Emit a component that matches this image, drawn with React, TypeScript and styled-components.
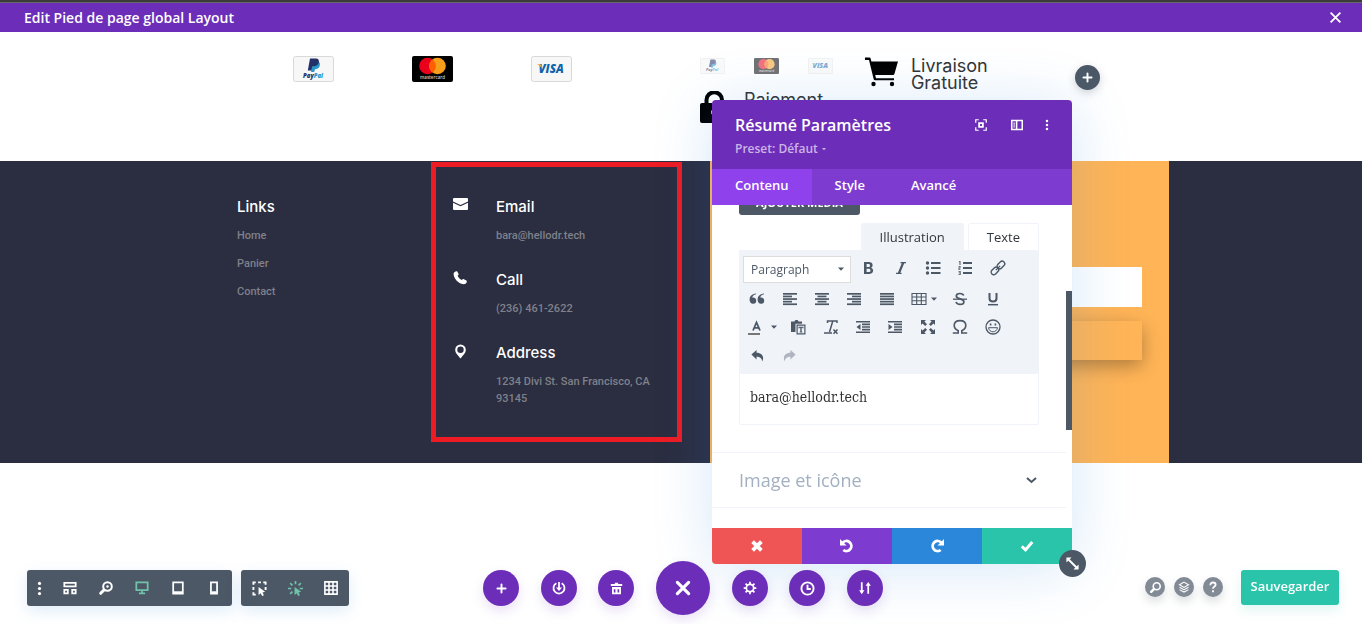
import React from "react";
import styled, { createGlobalStyle, css } from "styled-components";

const c = {
  purple: "#6c2eb9",
  violet: "#7e3bd0",
  bright: "#8f42ec",
  slate: "#4c5866",
  teal: "#29c4a9",
  red: "#ef5555",
  blue: "#2b87da",
  night: "#2b2d40",
  orange: "#ffb457",
  mint: "#70c3a9",
  pale: "#f0f3f8",
};
const ui = `"Open Sans", "Noto Sans", sans-serif`;
const geo = `Inter, "Liberation Sans", sans-serif`;

const Global = createGlobalStyle`
  * { box-sizing: border-box; }
  html, body { margin: 0; background: #fff; }
  body { min-height: 100vh; overflow: hidden; font-family: ${ui}; }
  button { border: 0; padding: 0; margin: 0; background: none; font: inherit; color: inherit; cursor: pointer; }
  h1, h2, h3, p, ul { margin: 0; padding: 0; font-weight: inherit; font-size: inherit; }
  svg { display: block; flex: none; }
`;

/* ---------- top bar ---------- */
const TopBar = styled.header`
  display: flex;
  align-items: center;
  justify-content: space-between;
  height: 32px;
  padding: 0 20px 0 24px;
  border-top: 2px solid #3a3a3a;
  box-shadow: inset 0 1px 0 #686868;
  background: ${c.purple};
  color: #fff;
`;
const TopTitle = styled.h1`
  font-size: 14px;
  font-weight: 600;
  line-height: 20px;
  padding-top: 1px;
`;

/* ---------- payment strip ---------- */
const Strip = styled.section`
  display: grid;
  grid-template-columns: 407fr 165fr 210fr 287fr;
  padding: 24px 0 38px 21.5%;
`;
const Cards = styled.div<{ $small?: boolean }>`
  display: flex;
  gap: ${(p) => (p.$small ? "29px" : "78px")};
  opacity: ${(p) => (p.$small ? 0.55 : 1)};
  padding-top: ${(p) => (p.$small ? "2px" : "0")};
  svg {
    width: ${(p) => (p.$small ? "25px" : "41px")};
    height: ${(p) => (p.$small ? "16px" : "26px")};
  }
`;
const Perk = styled.div<{ $below?: boolean }>`
  display: flex;
  align-items: flex-start;
  gap: ${(p) => (p.$below ? "19px" : "13px")};
  padding-top: ${(p) => (p.$below ? "17px" : "1px")};
`;
const PerkText = styled.h3`
  max-width: 90px;
  font: 400 18px/17px ${geo};
  color: #333;
`;
const AddRound = styled.button`
  display: grid;
  place-items: center;
  width: 25px;
  height: 25px;
  margin-top: 9px;
  border-radius: 50%;
  background: ${c.slate};
  color: #fff;
  box-shadow: 0 3px 8px rgba(76, 88, 102, 0.25);
`;

/* ---------- footer preview ---------- */
const FooterArea = styled.footer`
  display: grid;
  grid-template-columns: 194fr 279fr 459fr 193fr;
  padding-left: 17.4%;
  background: ${c.night};
`;
const heading = css`
  font: 500 15px/18px ${geo};
  color: #fff;
  margin-bottom: 11px;
`;
const small = css`
  font: 500 11px/17px Roboto, "Liberation Sans", sans-serif;
  color: #7f818a;
`;
const LinksCol = styled.nav`
  padding-top: 37px;
`;
const ColTitle = styled.h2`
  ${heading}
`;
const LinkList = styled.ul`
  display: grid;
  gap: 11px;
  list-style: none;
  ${small}
  a { color: inherit; text-decoration: none; }
`;
const ContactBox = styled.div`
  display: flex;
  flex-direction: column;
  gap: 27px;
  width: 90%;
  margin: 1px 0 21px;
  padding: 31px 17px 30px;
  border: 5px solid #ed1c24;
`;
const Contact = styled.div`
  display: flex;
  align-items: flex-start;
  gap: 28px;
  color: #fff;
`;
const ContactText = styled.p`
  ${small}
`;
const Subscribe = styled.form`
  display: flex;
  flex-direction: column;
  gap: 14px;
  padding: 106px 27px 0;
  background: ${c.orange};
`;
const EmailInput = styled.input`
  width: 100%;
  height: 40px;
  border: 0;
  background: #fff;
`;
const SubscribeButton = styled.button`
  height: 39px;
  background: ${c.orange};
  box-shadow: 0 6px 18px rgba(0, 0, 0, 0.3);
`;

/* ---------- bottom bar ---------- */
const BottomBar = styled.div`
  position: fixed;
  left: 0;
  right: 0;
  bottom: 9px;
  display: grid;
  grid-template-columns: 1fr auto 1fr;
  align-items: center;
  padding: 0 23px 0 27px;
`;
const Left = styled.div`
  display: flex;
  gap: 9px;
`;
const ToolGroup = styled.div`
  display: flex;
  height: 36px;
  border-radius: 3px;
  background: ${c.slate};
  color: #fff;
  box-shadow: 0 5px 15px rgba(43, 135, 218, 0.15);
`;
const Tool = styled.button<{ $on?: boolean; $narrow?: boolean }>`
  display: grid;
  place-items: center;
  width: ${(p) => (p.$narrow ? "25px" : "36px")};
  color: ${(p) => (p.$on ? c.mint : "#fff")};
`;
const Center = styled.div`
  display: flex;
  align-items: center;
  justify-content: space-between;
  width: 400px;
`;
const Round = styled.button<{ $big?: boolean }>`
  display: grid;
  place-items: center;
  width: ${(p) => (p.$big ? "54px" : "36px")};
  height: ${(p) => (p.$big ? "54px" : "36px")};
  border-radius: 50%;
  background: ${c.purple};
  color: #fff;
  box-shadow: 0 5px 12px rgba(108, 46, 185, 0.15);
`;
const Right = styled.div`
  display: flex;
  align-items: center;
  justify-content: flex-end;
  gap: 9px;
  padding-bottom: 2px;
`;
const Help = styled.button`
  display: grid;
  place-items: center;
  width: 20px;
  height: 20px;
  border-radius: 50%;
  background: #828a95;
  color: #fff;
  box-shadow: 0 5px 10px rgba(76, 88, 102, 0.2);
`;
const Save = styled.button`
  width: 98px;
  height: 35px;
  margin-left: 9px;
  padding-bottom: 2px;
  border-radius: 3px;
  background: ${c.teal};
  color: #fff;
  font-size: 13px;
  font-weight: 600;
  line-height: 20px;
  box-shadow: 0 5px 12px rgba(41, 196, 169, 0.15);
`;

/* ---------- settings window ---------- */
const Modal = styled.section`
  position: fixed;
  left: 712px;
  top: 100px;
  display: flex;
  flex-direction: column;
  width: 360px;
  height: 464px;
  border-radius: 4px;
  background: #fff;
  box-shadow: 0 5px 60px rgba(43, 135, 218, 0.2);
`;
const ModalHead = styled.div`
  display: flex;
  justify-content: space-between;
  height: 69px;
  padding: 14px 19px 0 23px;
  border-radius: 4px 4px 0 0;
  background: ${c.purple};
  color: #fff;
`;
const ModalTitle = styled.h2`
  font-size: 16px;
  font-weight: 600;
  line-height: 22px;
`;
const Preset = styled.button`
  display: flex;
  align-items: center;
  gap: 4px;
  margin-top: 4px;
  font-size: 12px;
  font-weight: 600;
  line-height: 18px;
  color: #ccb4e6;
`;
const HeadIcons = styled.div`
  display: flex;
  align-items: flex-start;
  gap: 24px;
  padding-top: 5px;
`;
const HeadIcon = styled.button`
  display: block;
  &:last-child { margin-left: -6px; }
`;
const Tabs = styled.div`
  display: flex;
  height: 36px;
  background: ${c.violet};
`;
const Tab = styled.button<{ $on?: boolean }>`
  padding: 0 23px;
  background: ${(p) => (p.$on ? c.bright : "transparent")};
  color: #fff;
  font-size: 13px;
  font-weight: 600;
  line-height: 32px;
  padding-bottom: 4px;
`;
const Body = styled.div`
  position: relative;
  flex: 1;
  overflow: hidden;
`;
const Scrolled = styled.div`
  margin-top: -15px;
`;
const Thumb = styled.div`
  position: absolute;
  right: 0;
  top: 86px;
  width: 6px;
  height: 139px;
  background: ${c.slate};
`;
const Field = styled.div`
  padding: 0 33px 27px 27px;
`;
const MediaButton = styled.button`
  width: 121px;
  height: 24px;
  border-radius: 3px;
  background: ${c.slate};
  color: #fff;
  font-size: 11px;
  font-weight: 700;
  line-height: 24px;
`;
const ModeTabs = styled.div`
  display: flex;
  justify-content: flex-end;
  gap: 4px;
  margin-top: 8px;
`;
const ModeTab = styled.button<{ $on?: boolean }>`
  height: 27px;
  padding: 0 18px;
  border: 1px solid ${c.pale};
  border-bottom: 0;
  border-radius: 3px 3px 0 0;
  background: ${(p) => (p.$on ? c.pale : "#fff")};
  color: #32373c;
  font-size: 13px;
  line-height: 26px;
`;
const Toolbar = styled.div`
  padding: 6px 0 5px;
  background: ${c.pale};
  color: ${c.slate};
`;
const Row = styled.div<{ $cols: string; $first?: boolean }>`
  display: grid;
  grid-template-columns: ${(p) => p.$cols};
  height: ${(p) => (p.$first ? "29px" : "28px")};
  margin: ${(p) => (p.$first ? "0 25px 0 4px" : "0 30px 0 2px")};
`;
const Cell = styled.button<{ $first?: boolean; $dim?: boolean }>`
  display: flex;
  align-items: center;
  justify-content: center;
  gap: 4px;
  height: ${(p) => (p.$first ? "24px" : "28px")};
  opacity: ${(p) => (p.$dim ? 0.4 : 1)};
`;
const SelectWrap = styled.div`
  position: relative;
  width: 108px;
  height: 27px;
  svg { position: absolute; right: 7px; top: 11px; pointer-events: none; }
`;
const FormatSelect = styled.select`
  appearance: none;
  width: 100%;
  height: 27px;
  padding: 0 7px;
  border: 1px solid #ddd;
  border-radius: 0;
  background: #fff;
  color: ${c.slate};
  font: 12px ${ui};
`;
const Editor = styled.textarea`
  display: block;
  width: 100%;
  height: 51px;
  padding: 12px 10px;
  border: 1px solid ${c.pale};
  border-top: 0;
  border-radius: 0 0 3px 3px;
  resize: none;
  overflow: hidden;
  color: #333;
  font: 14px/22px "DejaVu Serif Condensed", "DejaVu Serif", serif;
`;
const Accordion = styled.button`
  display: flex;
  align-items: center;
  justify-content: space-between;
  width: 354px;
  height: 56px;
  padding: 0 29px 0 27px;
  border: solid ${c.pale};
  border-width: 1px 0;
  color: #a2b0c1;
  font-size: 18px;
  line-height: 24px;
`;
const Actions = styled.div`
  display: grid;
  grid-template-columns: repeat(4, 1fr);
  height: 36px;
`;
const Action = styled.button<{ $bg: string }>`
  display: grid;
  place-items: center;
  background: ${(p) => p.$bg};
  color: #fff;
  &:first-child { border-bottom-left-radius: 4px; }
`;
const Resize = styled.button`
  position: absolute;
  right: -14px;
  bottom: -13px;
  display: grid;
  place-items: center;
  width: 27px;
  height: 27px;
  border-radius: 50%;
  background: ${c.slate};
  color: #fff;
`;

/* ---------- icons ---------- */
type IconProps = { s?: number; w?: number; children: React.ReactNode };
const Fill = ({ s = 16, children }: IconProps) => (
  <svg width={s} height={s} viewBox="0 0 16 16" fill="currentColor" aria-hidden="true">{children}</svg>
);
const Line = ({ s = 16, w = 2, children }: IconProps) => (
  <svg width={s} height={s} viewBox="0 0 16 16" fill="none" stroke="currentColor" strokeWidth={w} aria-hidden="true">{children}</svg>
);
const Caret = ({ w = 6 }: { w?: number }) => (
  <svg width={w} height={4} viewBox="0 0 6 4" fill="currentColor" aria-hidden="true"><path d="M0 .5h6L3 3.700z" /></svg>
);

const PayPal = () => (
  <svg viewBox="0 0 41 26" role="img" aria-label="PayPal">
    <rect x=".5" y=".5" width="40" height="25" rx="2" fill="#f7f7f7" stroke="#d9d9d9" />
    <path d="M18 5.500h6c3 0 3.500 2.500 2.500 5-.8 2-2.500 2.700-4.500 2.700l-.8 2.800h-3z" fill="#2997c8" />
    <path d="M17 2.500h6c2.500 0 3.400 1.700 2.800 4-.7 2.600-2.600 3.700-5.300 3.700h-1.300l-.9 4.300h-3.500z" fill="#253068" />
    <text x="10" y="21.500" fontFamily="Open Sans, sans-serif" fontStyle="italic" fontWeight="800" fontSize="6" fill="#253068">Pay<tspan fill="#2997c8">Pal</tspan></text>
  </svg>
);
const Mastercard = () => (
  <svg viewBox="0 0 41 26" role="img" aria-label="Mastercard">
    <rect width="41" height="26" rx="2" fill="#000" />
    <circle cx="15.500" cy="10" r="8.300" fill="#eb001b" />
    <circle cx="25.500" cy="10" r="8.300" fill="#f79e1b" />
    <path d="M20.500 3.400a8.300 8.300 0 0 1 0 13.200a8.300 8.300 0 0 1 0-13.200z" fill="#ff5f00" />
    <text x="20.500" y="22.600" textAnchor="middle" fontFamily="Open Sans, sans-serif" fontSize="4.500" fontWeight="600" fill="#ccc">mastercard</text>
  </svg>
);
const Visa = () => (
  <svg viewBox="0 0 41 26" role="img" aria-label="Visa">
    <rect x=".5" y=".5" width="40" height="25" rx="2" fill="#f7f7f7" stroke="#d9d9d9" />
    <text x="7.500" y="17" fontFamily="Open Sans, sans-serif" fontStyle="italic" fontWeight="800" fontSize="11.500" fill="#0e64ad">VISA</text>
    <path d="M5.500 8.300h3.300c.7 0 1 .3 1.200 1l.6 3.200C9.600 10.300 8 9.200 5.500 8.300z" fill="#f2ae3c" />
  </svg>
);
const Cart = () => (
  <svg width="33" height="30" viewBox="0 0 33 30" fill="#000" aria-hidden="true">
    <path d="M0 .5h4.500c.6 0 1 .3 1.100.9l.8 3.100H33l-3.600 12.400c-.2.700-.7 1.100-1.400 1.100H10.200l.8 3.300h18v1.900H10c-.7 0-1.100-.3-1.300-1L4 3H0z" />
    <circle cx="8.500" cy="27" r="2.200" /><circle cx="27" cy="27" r="2.200" />
  </svg>
);
const Lock = () => (
  <svg width="25" height="32" viewBox="0 0 25 32" aria-hidden="true">
    <path d="M6.500 13V9a7 7 0 0 1 15.500 0v2" fill="none" stroke="#000" strokeWidth="4" />
    <path d="M2 12h23v20H2a2 2 0 0 1-2-2V14a2 2 0 0 1 2-2z" fill="#000" />
    <path d="M14.500 17.500a3.500 3.500 0 0 1 1.500 6.600v4h-3v-4a3.500 3.500 0 0 1 1.500-6.600z" fill="#e6f0fb" />
  </svg>
);
const Mail = () => (
  <svg width="15" height="12" viewBox="0 0 15 12" fill="#fff" aria-hidden="true">
    <path d="M1 0h13a1 1 0 0 1 1 1v2.500L7.500 7 0 3.500V1a1 1 0 0 1 1-1z" /><path d="M0 4.800l7.500 3.400L15 4.800V11a1 1 0 0 1-1 1H1a1 1 0 0 1-1-1z" />
  </svg>
);
const Phone = () => (
  <svg width="15" height="14" viewBox="0 0 15 14" fill="#fff" aria-hidden="true">
    <path d="M1.600.9C2.800.1 3.700-.1 4.300.6l1.200 2.200c.3.700 0 1.300-.9 2 .8 1.900 2.200 3.400 4.300 4.200.7-.9 1.400-1.100 2-.8l2.500 1.400c.7.500.6 1.500-.3 2.600-1.300 1.600-4.200 1.500-7.200-.6C2.500 9 .4 5.500.6 2.800c.1-.8.400-1.400 1-1.900z" />
  </svg>
);
const Pin = () => (
  <svg width="15" height="15" viewBox="0 0 15 15" fill="#fff" aria-hidden="true">
    <path fillRule="evenodd" d="M7.500.5a5.300 5.300 0 0 1 5.300 5.400c0 3-3 5.400-5.300 8.600-2.300-3.200-5.300-5.600-5.300-8.600A5.300 5.300 0 0 1 7.500.5zm0 2a3.200 3.200 0 1 0 0 6.400 3.200 3.200 0 0 0 0-6.400z" />
  </svg>
);
const Plus = ({ s = 16 }: { s?: number }) => <Line s={s} w={2.400}><path d="M8 3v10M3 8h10" strokeLinecap="round" /></Line>;
const Dots = ({ s = 16 }: { s?: number }) => <Fill s={s}><circle cx="8" cy="2.600" r="1.700" /><circle cx="8" cy="8" r="1.700" /><circle cx="8" cy="13.400" r="1.700" /></Fill>;
const Zoom = ({ s = 16, dot }: { s?: number; dot?: boolean }) => (
  <Line s={s} w={2}><circle cx="9.500" cy="6.500" r="4.300" />{dot && <circle cx="9.500" cy="6.500" r="1.200" fill="currentColor" stroke="none" />}<path d="M6 10l-3.300 3.300" strokeWidth="3" strokeLinecap="round" /></Line>
);
const Pointer = () => <path d="M7 6.500l7 5-2.800.7 1.500 2.900-1.900.9-1.500-2.900L7 15z" fill="currentColor" stroke="none" />;

const bars = (widths: number[], align: "l" | "c" | "r") => (
  <Fill>
    {widths.map((w, i) => (
      <rect key={i} x={align === "l" ? 1 : align === "r" ? 15 - w : 8 - w / 2} y={2 + i * 2.6} width={w} height="1.700" />
    ))}
  </Fill>
);

const first = [
  ["Gras", <Fill><path fillRule="evenodd" d="M4 2h4.600c2.600 0 4 1.100 4 3.200 0 1.300-.6 2.100-1.700 2.600 1.500.4 2.200 1.400 2.200 2.800 0 2.200-1.500 3.400-4.300 3.400H4zm2.600 2v2.900h1.700c1.200 0 1.700-.5 1.700-1.500S9.400 4 8.300 4zm0 4.800V12h2c1.300 0 1.900-.5 1.900-1.600s-.7-1.600-2-1.600z" /></Fill>],
  ["Italique", <Line w={1.3}><path d="M7.500 2.600H13M3 13.400h5.500" /><path d="M10.300 2.500L5.800 13.500" strokeWidth="2.200" /></Line>],
  ["Liste à puces", <Fill><circle cx="2.500" cy="3" r="1.700" /><circle cx="2.500" cy="8" r="1.700" /><circle cx="2.500" cy="13" r="1.700" /><path d="M6 2h9.500v2H6zM6 7h9.500v2H6zM6 12h9.500v2H6z" /></Fill>],
  ["Liste numérotée", <Fill><path d="M6 2h9v2H6zM6 7h9v2H6zM6 12h9v2H6zM2.500 1H3.500v4h-1V2.200H1.600zM1.500 6h2v2.200h-1V9.400h1.200v.7H1.500V7.600h1.200V6.800H1.500zM1.500 11h2.200v4H1.500v-.8h1.300v-.9H1.700v-.7h1.100v-.8H1.500z" /></Fill>],
  ["Lien", <Line w={1.4}><g transform="rotate(-45 8 8)"><rect x="-.5" y="5.300" width="8.500" height="5.200" rx="2.600" /><rect x="8" y="5.300" width="8.500" height="5.200" rx="2.600" /><path d="M5 8h6" /></g></Line>],
] as const;
const second = [
  ["Citation", <Fill><path d="M7 3.200C4.600 3.800 3.500 5 3.300 6.700c2-.4 3.900.8 3.900 3a3 3 0 0 1-3.200 3C1.800 12.700.6 11 .6 8.700.6 5.300 3 3 7 2.500zM15 3.200c-2.400.6-3.500 1.800-3.700 3.500 2-.4 3.900.8 3.900 3a3 3 0 0 1-3.200 3c-2.200 0-3.400-1.700-3.400-4 0-3.400 2.400-5.700 6.400-6.200z" /></Fill>],
  ["Aligner à gauche", bars([14, 9, 14, 9, 14], "l")],
  ["Centrer", bars([14, 9, 14, 9, 14], "c")],
  ["Aligner à droite", bars([14, 9, 14, 9, 14], "r")],
  ["Justifier", bars([14, 14, 14, 14, 14], "l")],
  ["Tableau", <><Line w={1.1}><path d="M1 2.500h14v11H1zM1 6h14M1 9.800h14M5.700 2.500v11M10.300 2.500v11" /></Line><Caret /></>],
  ["Barré", <Line w={1.7}><path d="M11.700 4.600C11.200 3.100 9.900 2.500 8 2.500c-2.200 0-3.700 1-3.700 2.600 0 3.700 7.600 1.900 7.600 5.600 0 1.700-1.500 2.700-3.800 2.700-2.200 0-3.600-.8-4-2.500" /><path d="M1 8.200h14" strokeWidth="1.300" /></Line>],
  ["Souligné", <Line w={2}><path d="M4.500 2v5.300c0 2.200 1.200 3.300 3.500 3.300s3.500-1.100 3.500-3.300V2" /><path d="M3 13.700h10" strokeWidth="1.500" /></Line>],
] as const;
const third = [
  ["Couleur du texte", <><svg width="20" height="16" viewBox="0 0 20 16" fill="none" stroke="currentColor" aria-hidden="true"><path d="M6 11.500l3.500-8 3.500 8M7.500 8.800h4" strokeWidth="1.800" /><path d="M1 15h12" stroke="#777" strokeWidth="2" /></svg><Caret /></>],
  ["Coller en texte", <Fill><path d="M1 2.500h3.500C4.800 1.300 5.500 1 6.500 1s1.700.3 2 1.500H12V4.700H5.500V13H1z" /><path fillRule="evenodd" d="M6.500 5.500h9v10h-9zm1.200 1.200v7.600h6.600V6.700z" /><path d="M8.500 7.700h5v1.800h-.7l-.3-.7h-.8v3.900h.7v.8H9.600v-.8h.7V8.800h-.8l-.3.700h-.7z" /></Fill>],
  ["Supprimer la mise en forme", <Line w={1.5}><path d="M4.500 4V2H14v2M9.800 2L6.500 13M1 14h8" /><path d="M10.500 10.500l4 4.200M14.500 10.500l-4 4.200" /></Line>],
  ["Diminuer le retrait", <Fill><path d="M1 2h14v1.600H1zM7 4.600h8v1.600H7zM7 7.200h8v1.600H7zM7 9.800h8v1.600H7zM1 12.400h14V14H1zM5.500 5v6L1.500 8z" /></Fill>],
  ["Augmenter le retrait", <Fill><path d="M1 2h14v1.600H1zM7 4.600h8v1.600H7zM7 7.200h8v1.600H7zM7 9.800h8v1.600H7zM1 12.400h14V14H1zM1.500 5v6l4-3z" /></Fill>],
  ["Plein écran", <Fill><path d="M1 1h5L4.400 2.600l2.600 2.600L5.200 7 2.600 4.400 1 6zM15 1v5l-1.600-1.600L10.800 7 9 5.200l2.600-2.600L10 1zM1 15v-5l1.600 1.600L5.200 9 7 10.800l-2.600 2.600L6 15zM15 15h-5l1.600-1.600L9 10.800 10.800 9l2.600 2.600L15 10z" /></Fill>],
  ["Caractère spécial", <Line w={1.6}><path d="M.8 14h5.400v-2.200C3.500 10.600 2.200 9 2.200 6.600 2.200 3.500 4.600 1.600 8 1.600s5.800 1.900 5.800 5c0 2.400-1.300 4-4 5.200V14h5.400" /></Line>],
  ["Émoticône", <Line w={1.300}><circle cx="8" cy="8" r="7" /><path d="M5.600 4.500v2M10.400 4.500v2" strokeWidth="1.600" /><path d="M3.500 8.700h9C12 11.300 10.400 12.800 8 12.800S4 11.300 3.500 8.700z" strokeWidth="1" /></Line>],
] as const;
const undoPath = "M7 2v3c4.500 0 7 2.500 7 6 0 1.300-.4 2.400-1.200 3.500.3-3.600-2-5.300-5.800-5.300v3L1.500 7z";

const contacts = [
  [Mail, "Email", "bara@hellodr.tech"],
  [Phone, "Call", "(236) 461-2622"],
  [Pin, "Address", "1234 Divi St. San Francisco, CA 93145"],
] as const;

export default function App() {
  return (
    <>
      <Global />
      <TopBar>
        <TopTitle>Edit Pied de page global Layout</TopTitle>
        <button aria-label="Fermer"><Line s={13} w={2.2}><path d="M2 2l12 12M14 2L2 14" /></Line></button>
      </TopBar>

      <main>
        <Strip>
          <Cards><PayPal /><Mastercard /><Visa /></Cards>
          <div>
            <Cards $small><PayPal /><Mastercard /><Visa /></Cards>
            <Perk $below><Lock /><PerkText>Paiement</PerkText></Perk>
          </div>
          <Perk><Cart /><PerkText>Livraison Gratuite</PerkText></Perk>
          <AddRound aria-label="Ajouter"><Plus s={13} /></AddRound>
        </Strip>

        <FooterArea>
          <LinksCol>
            <ColTitle>Links</ColTitle>
            <LinkList>
              {["Home", "Panier", "Contact"].map((l) => <li key={l}><a href="#">{l}</a></li>)}
            </LinkList>
          </LinksCol>
          <ContactBox>
            {contacts.map(([Icon, title, text]) => (
              <Contact key={title}>
                <Icon />
                <div><ColTitle>{title}</ColTitle><ContactText>{text}</ContactText></div>
              </Contact>
            ))}
          </ContactBox>
          <Subscribe>
            <EmailInput type="email" aria-label="Email" />
            <SubscribeButton type="button" aria-label="Envoyer" />
          </Subscribe>
        </FooterArea>
      </main>

      <Modal aria-label="Résumé Paramètres">
        <ModalHead>
          <div>
            <ModalTitle>Résumé Paramètres</ModalTitle>
            <Preset>Preset: Défaut <Caret w={4} /></Preset>
          </div>
          <HeadIcons>
            <HeadIcon aria-label="Agrandir"><Line s={12} w={1.6}><path d="M1 5V1h4M11 1h4v4M15 11v4h-4M5 15H1v-4" /><path d="M5.500 5.500h5v5h-5z" strokeWidth="2.400" /></Line></HeadIcon>
            <HeadIcon aria-label="Ancrer"><Line s={12} w={2}><path d="M1 2h14v12H1zM7.500 2v12" /><path d="M3 5.500h2.500M3 8h2.500M3 10.500h2.500" strokeWidth="1.300" /></Line></HeadIcon>
            <HeadIcon aria-label="Options"><Dots s={12} /></HeadIcon>
          </HeadIcons>
        </ModalHead>
        <Tabs>
          <Tab $on>Contenu</Tab><Tab>Style</Tab><Tab>Avancé</Tab>
        </Tabs>
        <Body>
          <Scrolled>
            <Field>
              <MediaButton>AJOUTER MÉDIA</MediaButton>
              <ModeTabs><ModeTab $on>Illustration</ModeTab><ModeTab>Texte</ModeTab></ModeTabs>
              <Toolbar>
                <Row $first $cols="109px repeat(5, 1fr)">
                  <SelectWrap>
                    <FormatSelect aria-label="Format"><option>Paragraph</option></FormatSelect>
                    <Caret />
                  </SelectWrap>
                  {first.map(([n, i]) => <Cell key={n} $first aria-label={n}>{i}</Cell>)}
                </Row>
                <Row $cols="repeat(5, 1fr) 41px repeat(2, 1fr)">
                  {second.map(([n, i]) => <Cell key={n} aria-label={n}>{i}</Cell>)}
                </Row>
                <Row $cols="41px repeat(7, 1fr)">
                  {third.map(([n, i]) => <Cell key={n} aria-label={n}>{i}</Cell>)}
                </Row>
                <Row $cols="32px 32px">
                  <Cell aria-label="Annuler"><Fill s={15}><path d={undoPath} /></Fill></Cell>
                  <Cell $dim aria-label="Rétablir"><Fill s={15}><path d={undoPath} transform="matrix(-1 0 0 1 16 0)" /></Fill></Cell>
                </Row>
              </Toolbar>
              <Editor aria-label="Contenu" defaultValue="bara@hellodr.tech" />
            </Field>
            <Accordion>
              Image et icône
              <svg width="11" height="7" viewBox="0 0 11 7" fill="none" stroke={c.slate} strokeWidth="2" aria-hidden="true"><path d="M1 1l4.500 4L10 1" /></svg>
            </Accordion>
          </Scrolled>
          <Thumb />
        </Body>
        <Actions>
          <Action $bg={c.red} aria-label="Annuler"><Line s={14} w={4.4}><path d="M3 3l10 10M13 3L3 13" /></Line></Action>
          <Action $bg={c.violet} aria-label="Défaire"><Line w={2.8}><path d="M3.500 4.800A5 5 0 1 1 4.300 12" /><path d="M1 1v6.500h6.500z" fill="currentColor" stroke="none" /></Line></Action>
          <Action $bg={c.blue} aria-label="Refaire"><Line w={2.800}><path d="M12.500 4.800A5 5 0 1 0 11.700 12" /><path d="M15 1v6.500H8.500z" fill="currentColor" stroke="none" /></Line></Action>
          <Action $bg={c.teal} aria-label="Valider"><Line s={14} w={3.400}><path d="M2 8.500l4.300 4L14 3.500" /></Line></Action>
        </Actions>
        <Resize aria-label="Redimensionner"><Line s={15} w={2}><path d="M4 4l8 8" /><path d="M1.500 1.500h5.500l-5.500 5.500zM14.500 14.500H9l5.500-5.500z" fill="currentColor" stroke="none" /></Line></Resize>
      </Modal>

      <BottomBar>
        <Left>
          <ToolGroup>
            <Tool $narrow aria-label="Menu"><Dots s={15} /></Tool>
            <Tool aria-label="Structure"><Line s={14}><path d="M1.500 2h13v4h-13zM1.500 10h4v4h-4zM10.500 10h4v4h-4z" /></Line></Tool>
            <Tool aria-label="Zoom"><Zoom dot /></Tool>
            <Tool $on aria-label="Ordinateur"><Line s={14}><path d="M1.500 1.500h13v9h-13z" /><path d="M8 11v3M4.500 14h7" /></Line></Tool>
            <Tool aria-label="Tablette"><Line s={14}><path d="M2.500 1.500h11v13h-11z" /><path d="M3 13h10" strokeWidth="2.500" /></Line></Tool>
            <Tool aria-label="Téléphone"><Line s={14}><path d="M4.500 1.500h7v13h-7z" /><path d="M5 13h6" strokeWidth="2.500" /></Line></Tool>
          </ToolGroup>
          <ToolGroup>
            <Tool aria-label="Sélection"><Line s={15}><path d="M1.500 4V1.500H4M12 1.500h2.500V4M4 14.500H1.500V12M6.500 1.500h3M1.500 6.500v3M14.500 6.500v3" /><Pointer /></Line></Tool>
            <Tool $on aria-label="Clic"><Line s={15} w={1.8}><path d="M8 0v3.500M2.300 2.300l2.400 2.400M0 8h3.500M13.700 2.300l-2.400 2.400M12.500 8H16M2.300 13.700l2.400-2.400" /><Pointer /></Line></Tool>
            <Tool aria-label="Grille"><Line s={14} w={1.8}><path d="M1 1h14v14H1zM1 5.700h14M1 10.300h14M5.700 1v14M10.300 1v14" /></Line></Tool>
          </ToolGroup>
        </Left>
        <Center>
          <Round aria-label="Ajouter"><Plus s={13} /></Round>
          <Round aria-label="Enregistrer"><Line s={14} w={2}><path d="M5 2.500a6.300 6.300 0 1 0 6 0M8 1v8" /><path d="M4.500 7.500h7L8 11.500z" fill="currentColor" stroke="none" /></Line></Round>
          <Round aria-label="Supprimer"><Fill s={13}><path fillRule="evenodd" d="M6 1h4v1.500h5v2.300H1V2.500h5zM2.500 6h11v9h-11zm2.200 3v4h2V9zm4.600 0v4h2V9z" /></Fill></Round>
          <Round $big aria-label="Fermer"><Line s={18} w={2.800}><path d="M3 3l10 10M13 3L3 13" strokeLinecap="round" /></Line></Round>
          <Round aria-label="Réglages"><Line s={14} w={2}><circle cx="8" cy="8" r="4.200" /><path d="M8 .8v3M8 12.200v3M.8 8h3M12.200 8h3M2.900 2.900L5 5M11 11l2.100 2.100M2.900 13.100L5 11M11 5l2.100-2.100" /></Line></Round>
          <Round aria-label="Historique"><Line s={15} w={2}><circle cx="8" cy="8" r="6.500" /><path d="M8 4v4.500h3.500" /></Line></Round>
          <Round aria-label="Portabilité"><Line s={14} w={2}><path d="M4.300 1.500V13M11.700 14.500V4" /><path d="M1.300 10.500h6l-3 4.500zM8.700 5.500h6l-3-4.500z" fill="currentColor" stroke="none" /></Line></Round>
        </Center>
        <Right>
          <Help aria-label="Rechercher"><Zoom s={13} /></Help>
          <Help aria-label="Calques"><Line s={12} w={1.500}><path d="M8 1.500L14 5 8 8.500 2 5zM2 8.300l6 3.200 6-3.200M2 11.500l6 3.200 6-3.200" /></Line></Help>
          <Help aria-label="Aide"><Line s={12} w={2.400}><path d="M4.500 5.500c0-2.300 1.400-3.500 3.500-3.500s3.500 1.200 3.500 3C11.500 7.300 8 7.300 8 10.300M8 12.300V15" /></Line></Help>
          <Save>Sauvegarder</Save>
        </Right>
      </BottomBar>
    </>
  );
}
